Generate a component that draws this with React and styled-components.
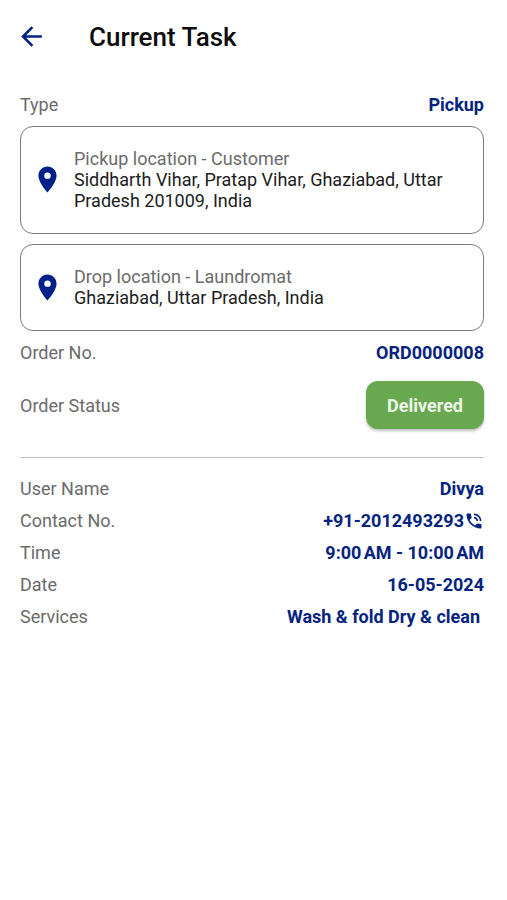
import React from "react";
import styled, { createGlobalStyle } from "styled-components";
import { MdArrowBack, MdLocationOn, MdPhoneInTalk } from "react-icons/md";

const navy = "#04237f";
const iconNavy = "#00218a";

const GlobalStyle = createGlobalStyle`
  * { box-sizing: border-box; }
  body { margin: 0; background: #fff; font-family: Roboto, "Liberation Sans", sans-serif; }
`;

const Screen = styled.main`
  padding: 16px 23px 24px 20px;
  font-size: 18px;
  line-height: 21px;
  color: #1c1c1c;
`;

const Header = styled.header`
  display: flex;
  align-items: center;
  gap: 42px;
  height: 42px;
`;

const BackButton = styled.button`
  display: flex;
  padding: 0;
  border: 0;
  background: none;
  color: ${iconNavy};
  margin: 0 0 2px -4px;
`;

const Title = styled.h1`
  margin: 0;
  font-size: 26px;
  line-height: 32px;
  font-weight: 500;
  color: #0c0c0c;
`;

const Row = styled.div`
  display: flex;
  justify-content: space-between;
  align-items: center;
`;

const TypeRow = styled(Row)`
  margin-top: 36px;
`;

const OrderRow = styled(Row)`
  margin-top: 11px;
`;

const StatusRow = styled(Row)`
  margin-top: 18px;
`;

const Label = styled.span`
  color: #6b6b6b;
`;

const Value = styled.span`
  display: flex;
  align-items: center;
  font-weight: 700;
  color: ${navy};
`;

const PhoneLink = styled.a`
  display: flex;
  align-items: center;
  font-weight: 700;
  color: ${navy};
  text-decoration: none;
`;

const LocationCard = styled.section`
  display: flex;
  align-items: center;
  gap: 11px;
  margin-top: 11px;
  padding: 21px 16px 22px 11px;
  border: 1px solid #7c7c7c;
  border-radius: 13px;
  svg { flex: none; color: ${iconNavy}; }

  & + & { margin-top: 10px; }
`;

const Address = styled.div`
  color: #1c1c1c;
`;

const StatusButton = styled.button`
  height: 48px;
  padding: 0 21px;
  border: 0;
  border-radius: 12px;
  background: #68a84f;
  box-shadow: 0 2px 3px rgba(0, 0, 0, 0.25);
  color: #edf7e9;
  font: 700 18px/21px Roboto, "Liberation Sans", sans-serif;
`;

const Divider = styled.hr`
  height: 1px;
  margin: 28px 0 20px;
  border: 0;
  background: #bebebe;
`;

const Details = styled.section`
  display: flex;
  flex-direction: column;
  gap: 11px;
`;

const Services = styled(Value)`
  padding-right: 4px;
`;

export default function App() {
  return (
    <>
      <GlobalStyle />
      <Screen>
        <Header>
          <BackButton aria-label="Back"><MdArrowBack size={31} /></BackButton>
          <Title>Current Task</Title>
        </Header>
        <TypeRow><Label>Type</Label><Value>Pickup</Value></TypeRow>
        <LocationCard>
          <MdLocationOn size={31} />
          <div>
            <Label>Pickup location - Customer</Label>
            <Address>Siddharth Vihar, Pratap Vihar, Ghaziabad, Uttar Pradesh 201009, India</Address>
          </div>
        </LocationCard>
        <LocationCard>
          <MdLocationOn size={31} />
          <div>
            <Label>Drop location - Laundromat</Label>
            <Address>Ghaziabad, Uttar Pradesh, India</Address>
          </div>
        </LocationCard>
        <OrderRow><Label>Order No.</Label><Value>ORD0000008</Value></OrderRow>
        <StatusRow><Label>Order Status</Label><StatusButton>Delivered</StatusButton></StatusRow>
        <Divider />
        <Details>
          <Row><Label>User Name</Label><Value>Divya</Value></Row>
          <Row>
            <Label>Contact No.</Label>
            <PhoneLink href="tel:+912012493293">+91-2012493293<MdPhoneInTalk size={20} /></PhoneLink>
          </Row>
          <Row><Label>Time</Label><Value>9:00&#8239;AM - 10:00&#8239;AM</Value></Row>
          <Row><Label>Date</Label><Value>16-05-2024</Value></Row>
          <Row><Label>Services</Label><Services>Wash &amp; fold Dry &amp; clean</Services></Row>
        </Details>
      </Screen>
    </>
  );
}
